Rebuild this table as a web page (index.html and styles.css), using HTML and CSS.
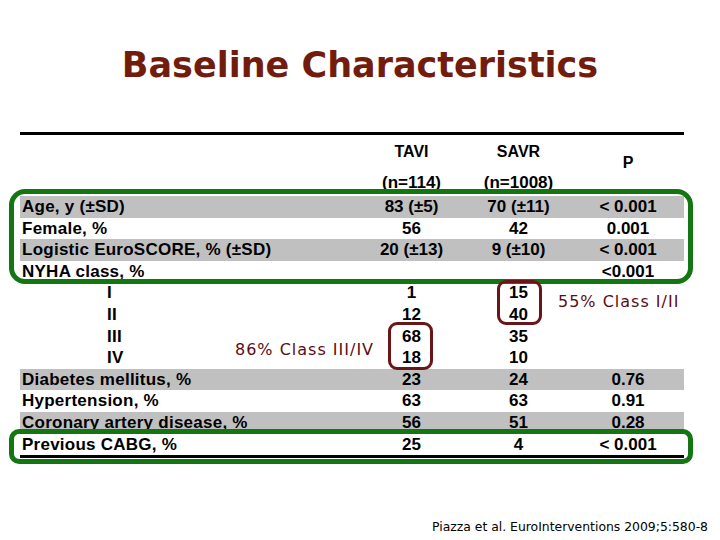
FILE: index.html
```html
<!DOCTYPE html>
<html>
<head>
<meta charset="utf-8">
<link rel="stylesheet" href="styles.css">
</head>
<body>
<div class="page">
  <h1 class="title">Baseline Characteristics</h1>
  <div class="table">
    <div class="thead">
      <div class="h c2">TAVI</div>
      <div class="h c3">SAVR</div>
      <div class="h hp">P</div>
      <div class="n c2">(n=114)</div>
      <div class="n c3">(n=1008)</div>
    </div>
    <div class="tbody">
      <div class="row gray"><span class="lbl">Age, y (±SD)</span><span>83 (±5)</span><span>70 (±11)</span><span>&lt; 0.001</span></div>
      <div class="row"><span class="lbl">Female, %</span><span>56</span><span>42</span><span>0.001</span></div>
      <div class="row gray"><span class="lbl">Logistic EuroSCORE, % (±SD)</span><span>20 (±13)</span><span>9 (±10)</span><span>&lt; 0.001</span></div>
      <div class="row"><span class="lbl">NYHA class, %</span><span></span><span></span><span>&lt;0.001</span></div>
      <div class="row"><span class="lbl sub">I</span><span>1</span><span>15</span><span></span></div>
      <div class="row"><span class="lbl sub">II</span><span>12</span><span>40</span><span></span></div>
      <div class="row"><span class="lbl sub">III</span><span>68</span><span>35</span><span></span></div>
      <div class="row"><span class="lbl sub">IV</span><span>18</span><span>10</span><span></span></div>
      <div class="row gray"><span class="lbl">Diabetes mellitus, %</span><span>23</span><span>24</span><span>0.76</span></div>
      <div class="row"><span class="lbl">Hypertension, %</span><span>63</span><span>63</span><span>0.91</span></div>
      <div class="row gray"><span class="lbl">Coronary artery disease, %</span><span>56</span><span>51</span><span>0.28</span></div>
      <div class="row"><span class="lbl">Previous CABG, %</span><span>25</span><span>4</span><span>&lt; 0.001</span></div>
    </div>
  </div>
  <p class="cite">Piazza et al. EuroInterventions 2009;5:580-8</p>

  <div class="gbox gbox1"></div>
  <div class="gbox gbox2"></div>
  <div class="rbox rbox1"></div>
  <div class="rbox rbox2"></div>
  <div class="note note1">55% Class I/II</div>
  <div class="note note2">86% Class III/IV</div>
</div>
</body>
</html>
```
FILE: styles.css
```css
html, body {
  margin: 0;
  padding: 0;
  background: #ffffff;
}
.page {
  position: relative;
  width: 720px;
  height: 540px;
  overflow: hidden;
  padding-top: 45px;
  box-sizing: border-box;
}
.title {
  margin: 0;
  font-family: "DejaVu Sans", Verdana, sans-serif;
  font-weight: bold;
  font-size: 35px;
  line-height: 40px;
  color: #721c0e;
  text-align: center;
}
.table {
  margin: 47px 0 0 20px;
  width: 664px;
  border-top: 3px solid #000;
  border-bottom: 3px solid #000;
  font-family: "Liberation Sans", Arial, sans-serif;
  font-weight: bold;
  color: #000;
}
.thead {
  display: grid;
  grid-template-columns: 338px 107px 107px 112px;
  grid-template-rows: 20px 21px;
  row-gap: 10px;
  padding: 7px 0 3px;
  text-align: center;
}
.h {
  font-size: 16px;
  line-height: 20px;
  grid-row: 1;
}
.n {
  font-size: 17px;
  line-height: 21px;
  grid-row: 2;
}
.c2 { grid-column: 2; }
.c3 { grid-column: 3; }
.hp {
  grid-column: 4;
  grid-row: 1 / 3;
  padding-top: 11px;
}
.row {
  display: grid;
  grid-template-columns: 338px 107px 107px 112px;
  height: 21.6px;
  line-height: 21.6px;
  font-size: 17px;
  text-align: center;
  white-space: nowrap;
}
.row.gray {
  background: #c0c0c0;
}
.lbl {
  text-align: left;
  padding-left: 2px;
  letter-spacing: 0.25px;
}
.lbl.sub {
  padding-left: 87px;
}
.cite {
  margin: 61px 0 0 432px;
  font-family: "DejaVu Sans", Tahoma, sans-serif;
  font-size: 12.4px;
  line-height: 16px;
  color: #000;
  white-space: nowrap;
}
.gbox {
  position: absolute;
  left: 9px;
  width: 684px;
  box-sizing: border-box;
  border: 5px solid #137613;
}
.gbox1 {
  top: 189px;
  height: 95px;
  border-radius: 16px;
}
.gbox2 {
  top: 429px;
  height: 35px;
  border-radius: 10px;
}
.rbox {
  position: absolute;
  box-sizing: border-box;
  border: 3px solid #6b1616;
  border-radius: 9px;
}
.rbox1 {
  left: 497px;
  top: 280px;
  width: 45px;
  height: 45px;
}
.rbox2 {
  left: 388px;
  top: 322px;
  width: 45px;
  height: 48px;
}
.note {
  position: absolute;
  font-family: "DejaVu Sans", Verdana, sans-serif;
  font-size: 16px;
  line-height: 20px;
  letter-spacing: 1px;
  color: #5e0c14;
  white-space: nowrap;
}
.note1 {
  left: 558px;
  top: 292px;
}
.note2 {
  left: 235px;
  top: 340px;
}
```
